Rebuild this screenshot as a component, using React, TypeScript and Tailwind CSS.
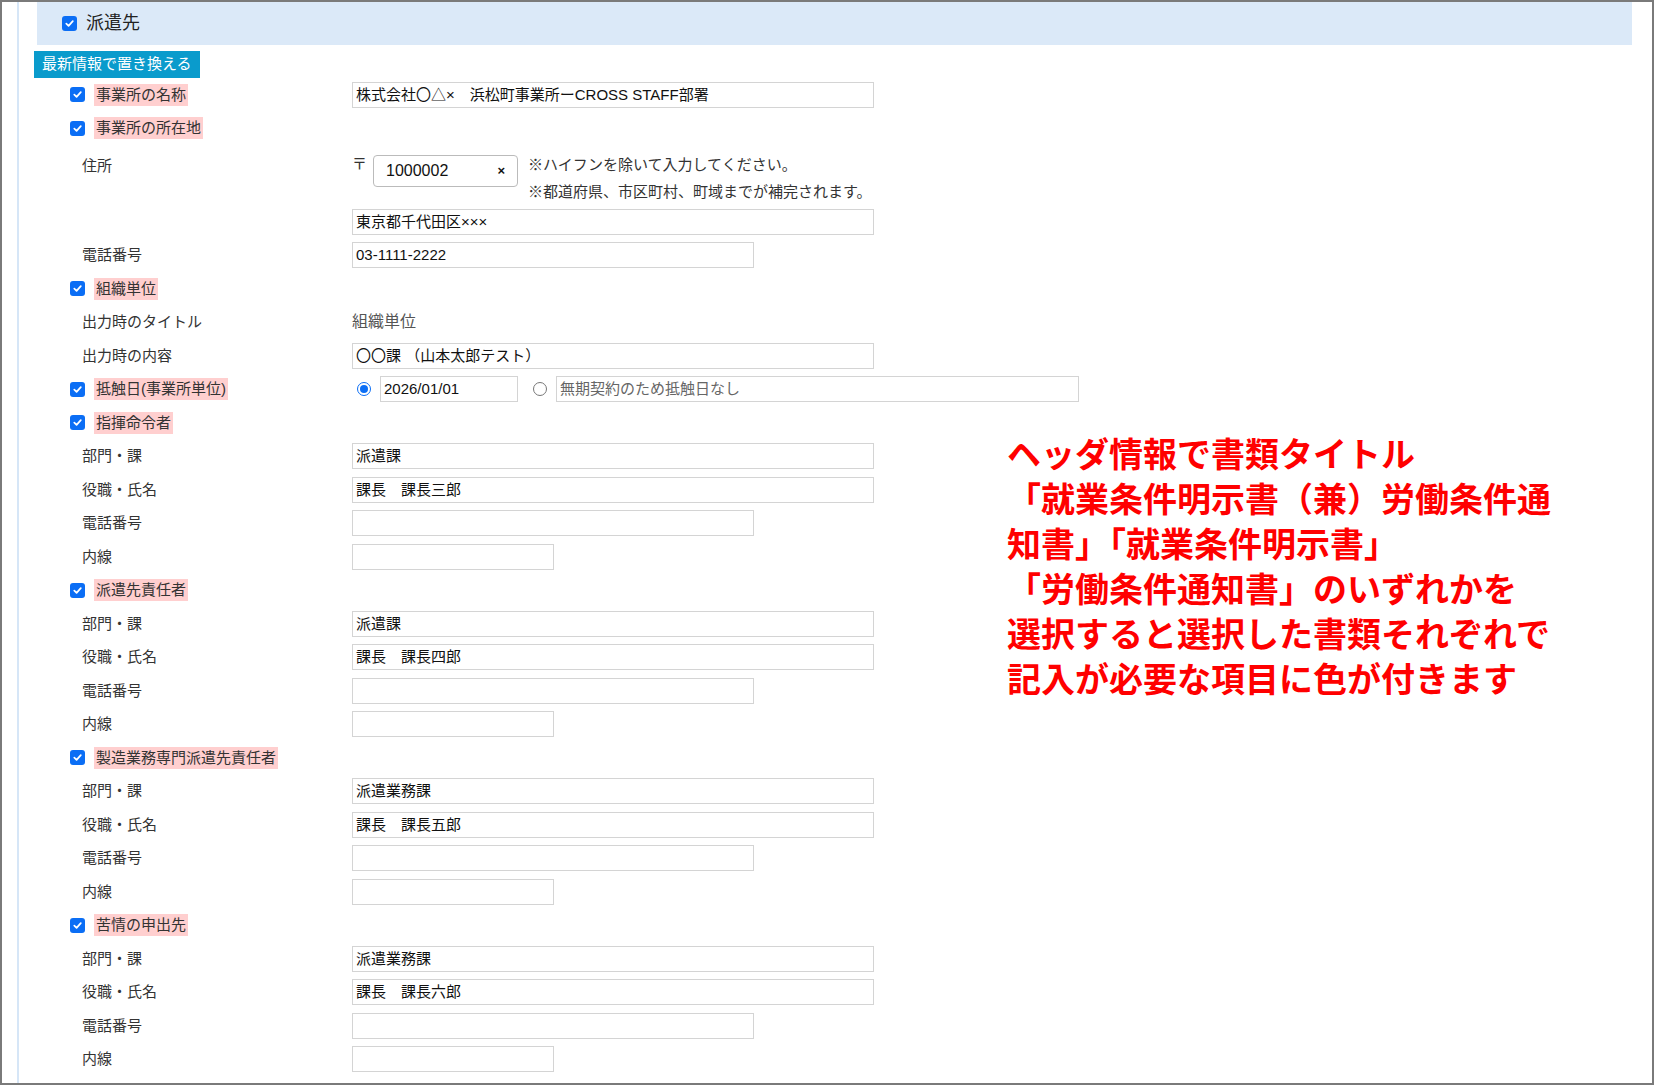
import React from "react";

type Row =
  | { kind: "head"; label: string }
  | { kind: "field"; label: string; value?: string; w: "l" | "m" | "s" };

const widths = { l: "w-[522px]", m: "w-[402px]", s: "w-[202px]" };

const Check = () => (
  <span className="inline-flex w-[15px] h-[15px] rounded-[3px] bg-[#0b6ef5] items-center justify-center shrink-0">
    <svg width="11" height="11" viewBox="0 0 12 12">
      <path d="M2.5 6.2 L5 8.6 L9.6 3.4" stroke="white" strokeWidth="1.9" fill="none" strokeLinecap="round" strokeLinejoin="round" />
    </svg>
  </span>
);

const Head = ({ label }: { label: string }) => (
  <div className="h-[33.5px] flex items-center gap-[9px] pl-[53px]">
    <Check />
    <span className="bg-[#ffcfcf] px-[2px] text-[15px] text-[#333] leading-[22px]">{label}</span>
  </div>
);

const Input = ({ value, w }: { value?: string; w: "l" | "m" | "s" }) => (
  <div className={`${widths[w]} h-[26px] border border-[#d4d4d4] px-[3px] flex items-center text-[15px] text-[#111]`}>
    {value}
  </div>
);

const Field = ({ label, children }: { label: string; children: React.ReactNode }) => (
  <div className="h-[33.5px] flex items-center">
    <div className="w-[335px] pl-[65px] text-[15px] text-[#333]">{label}</div>
    {children}
  </div>
);

const block = (head: string, rows: [string, string, "l" | "m" | "s"][]): Row[] => [
  { kind: "head", label: head },
  ...rows.map(([label, value, w]) => ({ kind: "field" as const, label, value, w })),
];

const person = (head: string, dept: string, name: string) =>
  block(head, [
    ["部門・課", dept, "l"],
    ["役職・氏名", name, "l"],
    ["電話番号", "", "m"],
    ["内線", "", "s"],
  ]);

const later: Row[] = [
  ...person("指揮命令者", "派遣課", "課長　課長三郎"),
  ...person("派遣先責任者", "派遣課", "課長　課長四郎"),
  ...person("製造業務専門派遣先責任者", "派遣業務課", "課長　課長五郎"),
  ...person("苦情の申出先", "派遣業務課", "課長　課長六郎"),
];

const render = (r: Row, i: number) =>
  r.kind === "head" ? (
    <Head key={i} label={r.label} />
  ) : (
    <Field key={i} label={r.label}>
      <Input value={r.value} w={r.w} />
    </Field>
  );

const Radio = ({ on }: { on?: boolean }) => (
  <span className={`w-[14px] h-[14px] rounded-full border ${on ? "border-[#0b6ef5]" : "border-[#777]"} flex items-center justify-center shrink-0`}>
    {on && <span className="w-[8px] h-[8px] rounded-full bg-[#0b6ef5]" />}
  </span>
);

export default function App() {
  return (
    <div
      className="w-[1654px] h-[1085px] overflow-hidden border-2 border-[#7a7a7a] bg-white relative"
      style={{ fontFamily: '"Liberation Sans", "Noto Sans CJK JP", sans-serif' }}
    >
      <div className="h-full ml-[15px] border-l-2 border-[#d6e6f7] pr-[20px]">
        <div className="ml-[18px] h-[43px] bg-[#dbe9f8] flex items-center gap-[9px] pl-[25px]">
          <Check />
          <span className="text-[18px] text-[#222]">派遣先</span>
        </div>
        <div className="pl-[15px] mt-[6px]">
          <button className="h-[27px] px-[8px] bg-[#0a9bcc] text-white text-[15px]">最新情報で置き換える</button>
        </div>
        <div className="-ml-[2px]">
          <Head label="事業所の名称" />
          <div className="h-[33.5px] flex items-center -mt-[33.5px] ml-[335px]">
            <Input value="株式会社〇△×　浜松町事業所ーCROSS STAFF部署" w="l" />
          </div>
          <Head label="事業所の所在地" />
          <div className="flex h-[60px] pt-[10px]">
            <div className="w-[335px] pl-[65px] text-[15px] text-[#333]">住所</div>
            <span className="text-[15px] text-[#333] mr-[6px] -mt-[2px]">〒</span>
            <div className="w-[145px] h-[32px] border border-[#bbb] rounded-[4px] flex items-center justify-between px-[12px] text-[16px] text-[#111]">
              <span>1000002</span>
              <span className="text-[13px] font-bold">×</span>
            </div>
            <div className="ml-[10px] text-[15px] text-[#333] leading-[27px] -mt-[4px]">
              <div>※ハイフンを除いて入力してください。</div>
              <div>※都道府県、市区町村、町域までが補完されます。</div>
            </div>
          </div>
          <div className="h-[33.5px] flex items-center pl-[335px]">
            <Input value="東京都千代田区×××" w="l" />
          </div>
          <Field label="電話番号"><Input value="03-1111-2222" w="m" /></Field>
          <Head label="組織単位" />
          <Field label="出力時のタイトル"><span className="text-[16px] text-[#555]">組織単位</span></Field>
          <Field label="出力時の内容"><Input value="〇〇課 （山本太郎テスト）" w="l" /></Field>
          <div className="relative">
            <Head label="抵触日(事業所単位)" />
            <div className="absolute left-[340px] top-0 h-[33.5px] flex items-center">
              <Radio on />
              <div className="ml-[9px] w-[138px] h-[26px] border border-[#d4d4d4] px-[3px] flex items-center text-[15px] text-[#111]">2026/01/01</div>
              <span className="ml-[15px]"><Radio /></span>
              <div className="ml-[9px] w-[523px] h-[26px] border border-[#d4d4d4] px-[3px] flex items-center text-[15px] text-[#666]">無期契約のため抵触日なし</div>
            </div>
          </div>
          {later.map(render)}
        </div>
      </div>
      <div
        className="absolute left-[1005px] top-[428px] text-[34px] leading-[45px] font-bold text-[#ff0000]"
        style={{ fontFamily: '"Noto Sans CJK JP", sans-serif' }}
      >
        <div>ヘッダ情報で書類タイトル</div>
        <div>「就業条件明示書（兼）労働条件通</div>
        <div>知書」「就業条件明示書」</div>
        <div>「労働条件通知書」のいずれかを</div>
        <div>選択すると選択した書類それぞれで</div>
        <div>記入が必要な項目に色が付きます</div>
      </div>
    </div>
  );
}
